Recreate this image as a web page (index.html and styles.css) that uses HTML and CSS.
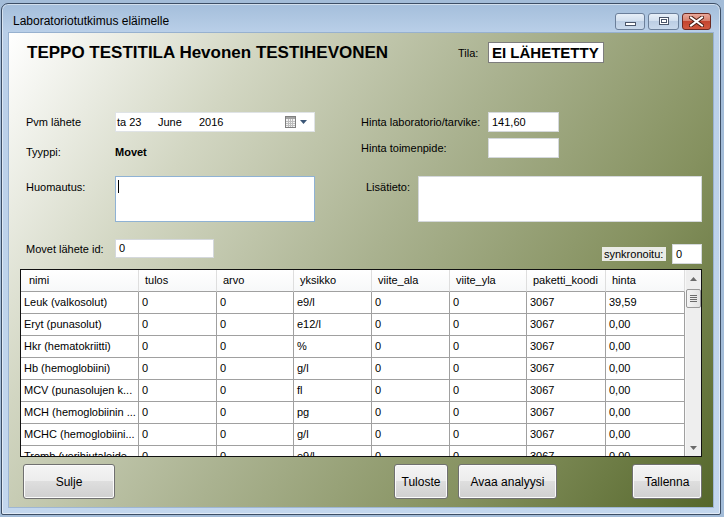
FILE: index.html
```html
<!DOCTYPE html>
<html lang="fi">
<head>
<meta charset="utf-8">
<title>Laboratoriotutkimus eläimelle</title>
<link rel="stylesheet" href="styles.css">
</head>
<body>
<div class="window">
  <div class="titlebar">
    <span class="title">Laboratoriotutkimus eläimelle</span>
    <div class="controls">
      <span class="cbtn cmin"><svg width="11" height="4" viewBox="0 0 11 4"><rect x="0.5" y="0.5" width="10" height="3" fill="#fff" stroke="#4b566a"/></svg></span>
      <span class="cbtn cmax"><svg width="10" height="8" viewBox="0 0 10 8"><rect x="0.5" y="0.5" width="9" height="7" fill="#fff" stroke="#4b566a"/><rect x="2.5" y="2.5" width="5" height="3" fill="none" stroke="#4b566a"/></svg></span>
      <span class="cbtn cclose"><svg width="15" height="11" viewBox="0 0 15 11"><path d="M2 1.5 L13 9.5 M13 1.5 L2 9.5" stroke="#4a1c12" stroke-width="4" stroke-linecap="square"/><path d="M2 1.5 L13 9.5 M13 1.5 L2 9.5" stroke="#ffffff" stroke-width="2" stroke-linecap="square"/></svg></span>
    </div>
  </div>
  <div class="client">
    <div class="head">
      <h1 class="owner">TEPPO TESTITILA Hevonen TESTIHEVONEN</h1>
      <span class="tila-label">Tila:</span>
      <span class="tila-box">EI LÄHETETTY</span>
    </div>

    <div class="form">
      <div class="col col-left">
        <div class="frow r-date">
          <span class="lbl lw-left">Pvm lähete</span>
          <div class="field date">
            <span class="d1">ta 23</span><span class="d2">June</span><span class="d3">2016</span>
            <svg class="cal" width="11" height="12" viewBox="0 0 11 12"><rect x="0.5" y="0.5" width="10" height="11" fill="#f3f3f3" stroke="#7f7f7f"/><rect x="1" y="1" width="9" height="2" fill="#a3a3a3"/><path d="M1 5.5H10M1 7.5H10M1 9.5H10M3.5 3V11M5.5 3V11M7.5 3V11" stroke="#bdbdbd" stroke-width="1"/></svg>
            <svg class="ddarrow" width="7" height="4" viewBox="0 0 7 4"><polygon points="0,0 7,0 3.5,4" fill="#3b5677"/></svg>
          </div>
        </div>
        <div class="frow r-type">
          <span class="lbl lw-left">Tyyppi:</span>
          <span class="typeval">Movet</span>
        </div>
        <div class="frow r-note">
          <span class="lbl lw-left lbl-top">Huomautus:</span>
          <div class="field memo memo-left focused"><span class="caret"></span></div>
        </div>
        <div class="frow r-id">
          <span class="lbl lw-left">Movet lähete id:</span>
          <div class="field idbox">0</div>
        </div>
      </div>

      <div class="col col-right">
        <div class="frow r-price">
          <span class="lbl lw-right">Hinta laboratorio/tarvike:</span>
          <div class="field price">141,60</div>
        </div>
        <div class="frow r-price2">
          <span class="lbl lw-right">Hinta toimenpide:</span>
          <div class="field price"></div>
        </div>
        <div class="frow r-info">
          <span class="lbl lw-info lbl-top">Lisätieto:</span>
          <div class="field memo memo-right"></div>
        </div>
        <div class="frow r-sync">
          <span class="sync-label">synkronoitu:</span>
          <div class="field syncbox">0</div>
        </div>
      </div>
    </div>

    <div class="grid">
      <div class="gtable">
        <div class="grow ghead"><span class="first">nimi</span><span>tulos</span><span>arvo</span><span>yksikko</span><span>viite_ala</span><span>viite_yla</span><span>paketti_koodi</span><span>hinta</span></div>
        <div class="grow"><span>Leuk (valkosolut)</span><span>0</span><span>0</span><span>e9/l</span><span>0</span><span>0</span><span>3067</span><span>39,59</span></div>
        <div class="grow"><span>Eryt (punasolut)</span><span>0</span><span>0</span><span>e12/l</span><span>0</span><span>0</span><span>3067</span><span>0,00</span></div>
        <div class="grow"><span>Hkr (hematokriitti)</span><span>0</span><span>0</span><span>%</span><span>0</span><span>0</span><span>3067</span><span>0,00</span></div>
        <div class="grow"><span>Hb (hemoglobiini)</span><span>0</span><span>0</span><span>g/l</span><span>0</span><span>0</span><span>3067</span><span>0,00</span></div>
        <div class="grow"><span>MCV (punasolujen k...</span><span>0</span><span>0</span><span>fl</span><span>0</span><span>0</span><span>3067</span><span>0,00</span></div>
        <div class="grow"><span>MCH (hemoglobiinin ...</span><span>0</span><span>0</span><span>pg</span><span>0</span><span>0</span><span>3067</span><span>0,00</span></div>
        <div class="grow"><span>MCHC (hemoglobiini...</span><span>0</span><span>0</span><span>g/l</span><span>0</span><span>0</span><span>3067</span><span>0,00</span></div>
        <div class="grow"><span>Tromb (verihiutaleide...</span><span>0</span><span>0</span><span>e9/l</span><span>0</span><span>0</span><span>3067</span><span>0,00</span></div>
      </div>
      <div class="vscroll">
        <div class="sarrow"><svg width="7" height="4" viewBox="0 0 7 4"><polygon points="3.5,0 7,4 0,4" fill="#6a6a6a"/></svg></div>
        <div class="thumb"><i></i><i></i><i></i><i></i></div>
        <div class="track"></div>
        <div class="sarrow"><svg width="7" height="4" viewBox="0 0 7 4"><polygon points="0,0 7,0 3.5,4" fill="#6a6a6a"/></svg></div>
      </div>
    </div>

    <div class="buttons">
      <div class="btn b-sulje">Sulje</div>
      <div class="btn b-tuloste">Tuloste</div>
      <div class="btn b-avaa">Avaa analyysi</div>
      <div class="btn b-tallenna">Tallenna</div>
    </div>
  </div>
</div>
</body>
</html>
```

FILE: styles.css
```css
* { box-sizing: border-box; }
html, body { margin: 0; padding: 0; }
body {
  width: 724px;
  height: 517px;
  overflow: hidden;
  background: #a3bcd8;
  font-family: "Liberation Sans", Arial, sans-serif;
  font-size: 11px;
  color: #000;
}

/* window frame */
.window {
  margin: 3px 0 0 1px;
  width: 720px;
  height: 512px;
  border: 1px solid #3d4e65;
  border-radius: 7px 7px 2px 2px;
  background: linear-gradient(to bottom, #a4bedb 0px, #b9cfe8 28px, #c3d7ee 100%);
  box-shadow: inset 0 0 0 1px rgba(255,255,255,0.5);
  display: flex;
  flex-direction: column;
  padding: 0 7px 7px 7px;
}
.titlebar {
  height: 29px;
  padding-top: 5px;
  display: flex;
  align-items: center;
  justify-content: space-between;
}
.title {
  margin-left: 4px;
  font-size: 12px;
  color: #000;
}
.controls {
  display: flex;
  gap: 3px;
  margin-right: 2px;
}
.cbtn {
  height: 17px;
  border-radius: 3px;
  border: 1px solid #6b7f9a;
  display: flex;
  align-items: center;
  justify-content: center;
}
.cmin, .cmax {
  width: 30px;
  background: linear-gradient(to bottom, #e7eff8 0%, #d3e0ef 45%, #bccee4 50%, #c9d9ec 100%);
}
.cmax { width: 31px; }
.cmin svg { margin-top: 6px; }
.cclose {
  width: 29px;
  border-color: #6d2a22;
  background: linear-gradient(to bottom, #e9a89a 0%, #d7816e 45%, #c4452f 50%, #d25a40 100%);
}

/* client area */
.client {
  flex: 1;
  display: flex;
  flex-direction: column;
  background: linear-gradient(125deg, #ffffff 0%, #d2d6c2 25%, #aab290 50%, #85915f 75%, #55672b 100%);
  outline: 1px solid rgba(90,120,160,0.35);
}

.head {
  margin-top: 9px;
  height: 21px;
  padding-left: 18px;
  display: flex;
  align-items: center;
}
.owner {
  margin: 0;
  width: 431px;
  font-size: 17px;
  font-weight: bold;
  line-height: 20px;
  white-space: nowrap;
}
.tila-label {
  width: 30px;
  font-size: 11px;
}
.tila-box {
  width: 116px;
  height: 21px;
  border: 1px solid #7d7d7d;
  background: #fff;
  font-size: 15px;
  font-weight: bold;
  line-height: 19px;
  padding-left: 3px;
  white-space: nowrap;
}

/* form */
.form {
  margin-top: 49px;
  padding-left: 17px;
  display: grid;
  grid-template-columns: 335px 341px;
}
.col { display: flex; flex-direction: column; }
.frow { display: flex; align-items: center; }
.lbl { line-height: 14px; white-space: nowrap; }
.lbl-top { align-self: flex-start; padding-top: 4px; }
.lw-left { width: 89px; }
.lw-right { width: 127px; }
.lw-info { width: 57px; padding-left: 5px; }

.field {
  background: #fff;
  border: 1px solid #d4d8dc;
  font-size: 11px;
  line-height: 18px;
  padding-left: 3px;
  white-space: nowrap;
}
.date {
  width: 200px;
  height: 20px;
  display: flex;
  align-items: center;
  padding-left: 1px;
  border-color: #dfe3e6;
}
.d1 { width: 41px; }
.d2 { width: 41px; }
.d3 { flex: 1; }
.cal { margin-right: 4px; }
.ddarrow { margin-right: 7px; }

.r-type { margin-top: 13px; height: 14px; }
.typeval { font-weight: bold; line-height: 14px; }
.r-note { margin-top: 17px; }
.memo { height: 46px; }
.memo-left { width: 200px; padding: 3px 0 0 2px; }
.memo-right { width: 284px; }
.focused { border-color: #8fb2d4; }
.caret {
  display: block;
  width: 1px;
  height: 13px;
  background: #000;
}
.r-id { margin-top: 17px; }
.idbox { width: 99px; height: 19px; line-height: 17px; }

.price { width: 71px; height: 20px; }
.r-price2 { margin-top: 6px; }
.r-info { margin-top: 18px; }
.r-sync { margin-top: 22px; justify-content: flex-end; }
.sync-label {
  width: 64px;
  height: 14px;
  line-height: 14px;
  padding-left: 2px;
  background: #eaebe6;
  margin-right: 6px;
  white-space: nowrap;
}
.syncbox { width: 30px; height: 20px; }

/* data grid */
.grid {
  margin: 5px 0 0 11px;
  width: 682px;
  height: 188px;
  border: 1px solid #111;
  background: #fff;
  display: flex;
}
.gtable {
  width: 664px;
  overflow: hidden;
}
.grow {
  display: grid;
  grid-template-columns: 118px 78px 77px 78px 78px 77px 79px 79px;
  height: 22px;
}
.grow span {
  border-right: 1px solid #a0a0a0;
  border-bottom: 1px solid #a0a0a0;
  padding-left: 3px;
  line-height: 21px;
  white-space: nowrap;
  overflow: hidden;
}
.ghead span {
  background: linear-gradient(to bottom, #ffffff 0%, #f7f8f9 100%);
  border-right-color: #dedede;
  padding-left: 6px;
}
.ghead span.first { padding-left: 8px; }

.vscroll {
  width: 16px;
  background: #eeeeee;
  border-left: 1px solid #f7f7f7;
  display: flex;
  flex-direction: column;
}
.sarrow {
  height: 17px;
  display: flex;
  align-items: center;
  justify-content: center;
}
.thumb {
  margin: 2px 0 0 0;
  height: 19px;
  border: 1px solid #999;
  border-radius: 2px;
  background: linear-gradient(to right, #f4f4f4, #e2e2e2);
  display: flex;
  flex-direction: column;
  align-items: center;
  justify-content: center;
  gap: 1px;
}
.thumb i {
  display: block;
  width: 7px;
  height: 1px;
  background: #6b6b6b;
}
.track { flex: 1; }

/* buttons */
.buttons {
  margin-top: 7px;
  padding-left: 14px;
  display: flex;
}
.btn {
  height: 35px;
  border: 1px solid #707070;
  border-radius: 3px;
  background: linear-gradient(to bottom, #f4f4f4 0%, #ececec 50%, #dedede 50%, #d0d0d0 100%);
  box-shadow: inset 0 0 0 1px #fbfbfb;
  font-size: 12px;
  display: flex;
  align-items: center;
  justify-content: center;
  white-space: nowrap;
}
.b-sulje { width: 92px; }
.b-tuloste { width: 54px; margin-left: 279px; }
.b-avaa { width: 99px; margin-left: 10px; }
.b-tallenna { width: 70px; margin-left: 75px; }
```
